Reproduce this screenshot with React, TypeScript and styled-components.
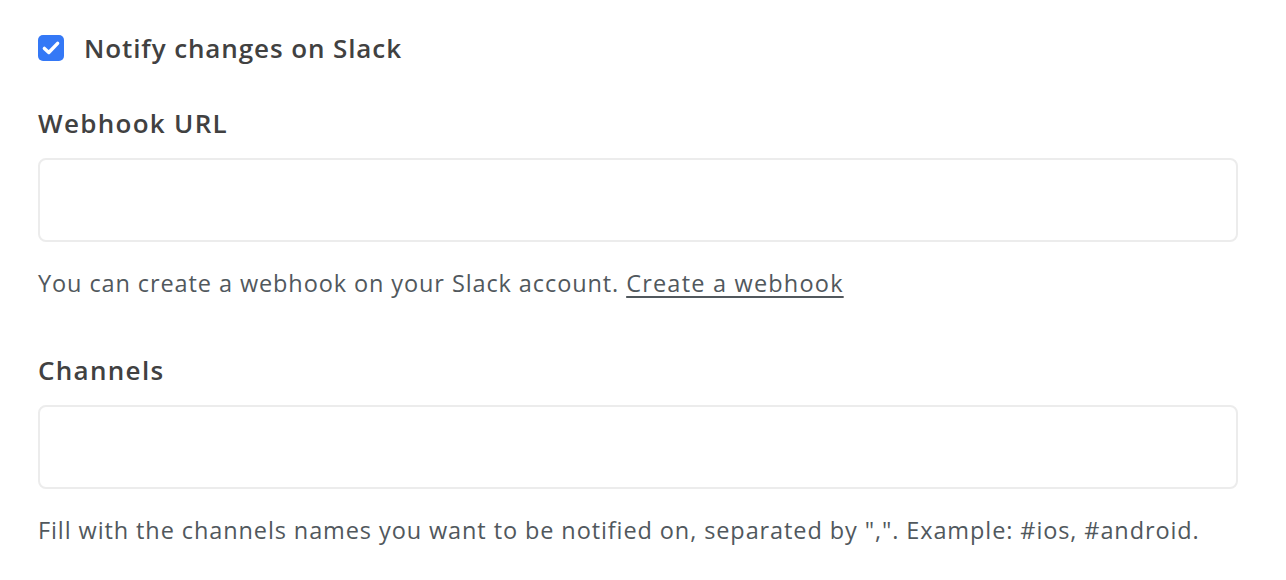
import { createGlobalStyle, styled } from "styled-components";

const GlobalStyle = createGlobalStyle`
  body {
    margin: 0;
    background: #ffffff;
    font-family: "Open Sans", "Noto Sans", sans-serif;
  }
`;

const Page = styled.div`
  padding: 33px 48px 0 38px;
  display: flex;
  flex-direction: column;
`;

const CheckRow = styled.label`
  display: flex;
  align-items: center;
  gap: 20px;
  height: 30px;
  margin-bottom: 45px;
`;

const Box = styled.span`
  width: 26px;
  height: 26px;
  border-radius: 5px;
  background: #3478f6;
  display: flex;
  align-items: center;
  justify-content: center;
`;

const Title = styled.span`
  font-size: 26px;
  font-weight: 600;
  color: #414141;
  letter-spacing: 0.9px;
`;

const Field = styled.div<{ $gap: number }>`
  display: flex;
  flex-direction: column;
  margin-bottom: ${(p) => p.$gap}px;
`;

const Label = styled.div`
  font-size: 26px;
  font-weight: 600;
  color: #414141;
  line-height: 30px;
  letter-spacing: 1.3px;
  margin-bottom: 20px;
`;

const Input = styled.input`
  box-sizing: border-box;
  width: 100%;
  height: 84px;
  border: 2px solid #ececec;
  border-radius: 8px;
  outline: none;
  padding: 0 16px;
  font-size: 22px;
  font-family: inherit;
`;

const Help = styled.p`
  margin: 26px 0 0;
  font-size: 23.5px;
  line-height: 30px;
  letter-spacing: 0.9px;
  color: #51585d;

  a {
    color: #51585d;
    text-decoration: underline;
    text-underline-offset: 4px;
    letter-spacing: 1.2px;
  }
`;

function Check() {
  return (
    <svg width="22" height="22" viewBox="0 0 16 16" fill="none">
      <path
        d="M3.2 8.3 L6.4 11.3 L12.8 4.6"
        stroke="#fff"
        strokeWidth="2.5"
        strokeLinecap="round"
        strokeLinejoin="round"
      />
    </svg>
  );
}

export default function App() {
  return (
    <>
      <GlobalStyle />
      <Page>
        <CheckRow>
          <Box>
            <Check />
          </Box>
          <Title>Notify changes on Slack</Title>
        </CheckRow>
        <Field $gap={57}>
          <Label>Webhook URL</Label>
          <Input type="text" />
          <Help>
            You can create a webhook on your Slack account.{" "}
            <a href="#">Create a webhook</a>
          </Help>
        </Field>
        <Field $gap={0}>
          <Label>Channels</Label>
          <Input type="text" />
          <Help>
            Fill with the channels names you want to be notified on, separated
            by ",". Example: #ios, #android.
          </Help>
        </Field>
      </Page>
    </>
  );
}
